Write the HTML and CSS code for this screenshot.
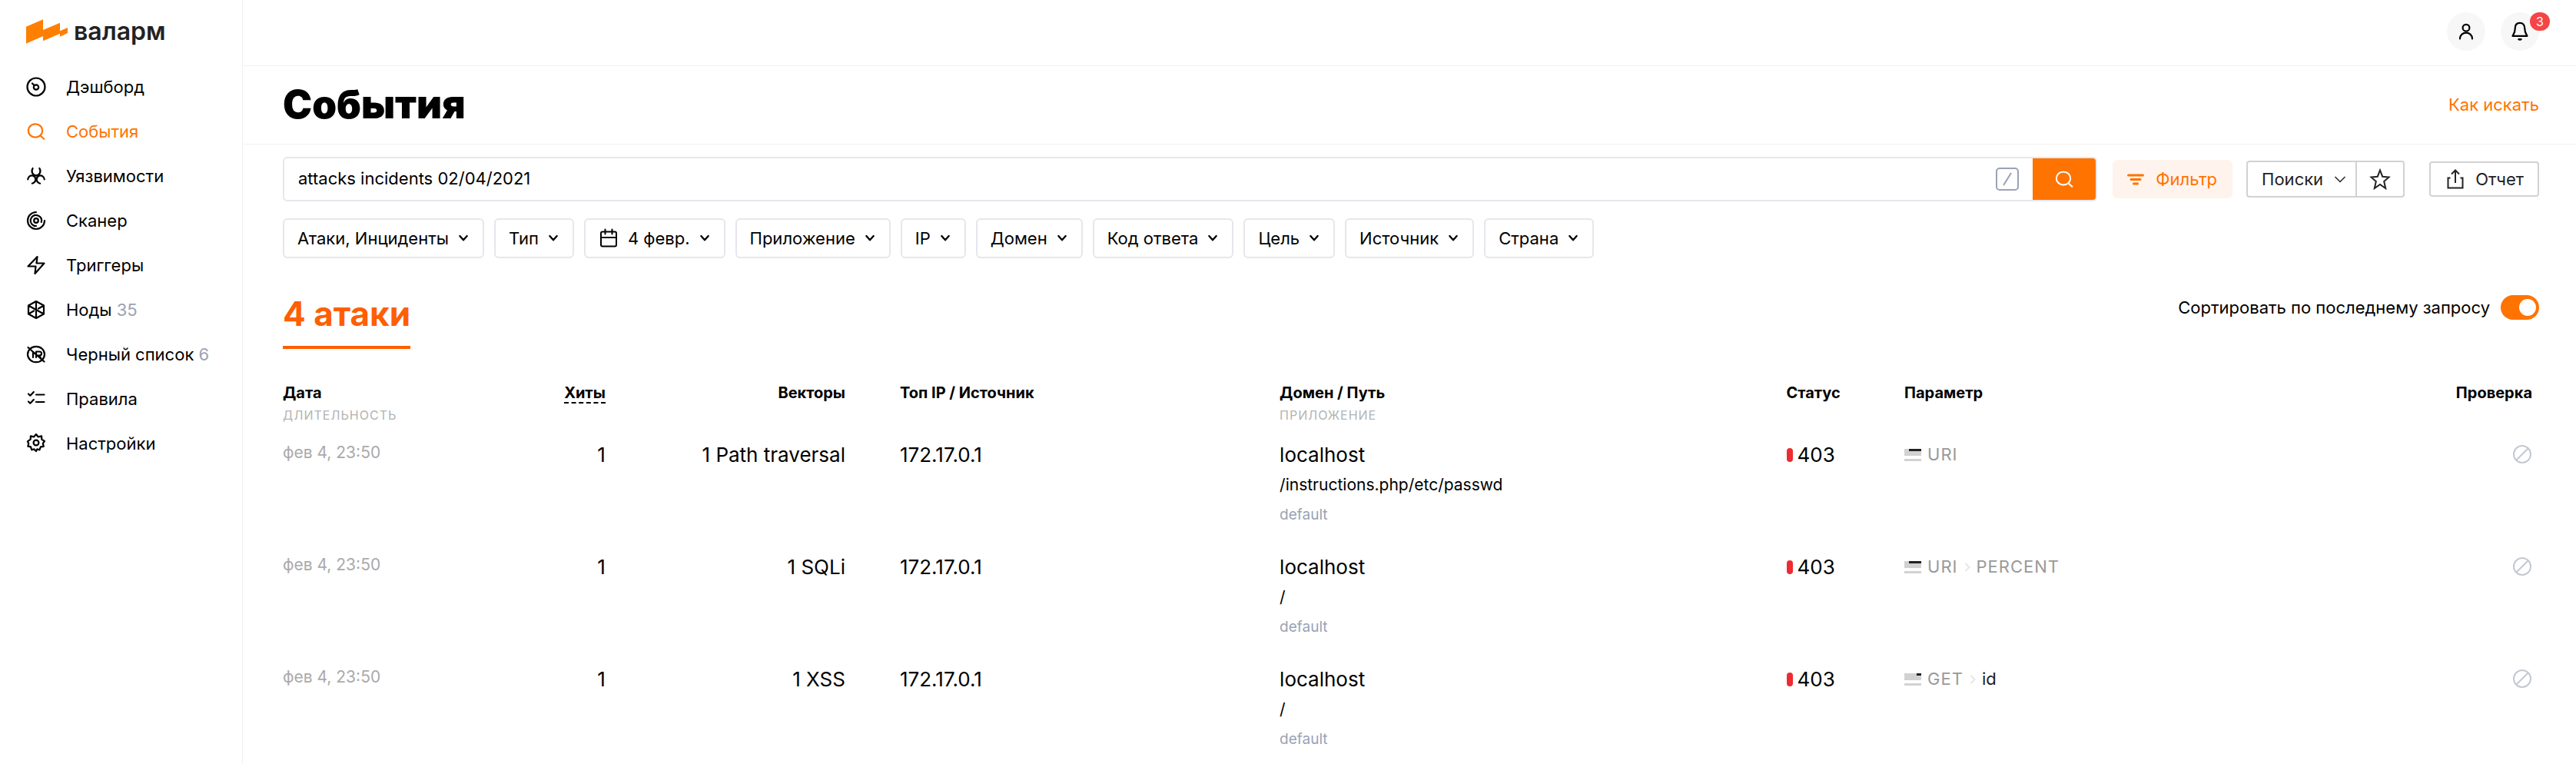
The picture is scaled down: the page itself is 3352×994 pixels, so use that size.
FILE: index.html
```html
<!DOCTYPE html>
<html lang="ru">
<head>
<meta charset="utf-8">
<title>События — Валарм</title>
<link rel="stylesheet" href="styles.css">
</head>
<body>
<svg class="sprite" aria-hidden="true">
  <symbol id="i-dash" viewBox="0 0 26 26"><circle cx="13" cy="13" r="11.5"/><circle cx="13" cy="13.5" r="3.2"/><path d="M8 8.5l2.8 2.8"/></symbol>
  <symbol id="i-search" viewBox="0 0 26 26"><ellipse cx="12" cy="12" rx="9.2" ry="8.6"/><path d="M18.5 18.5l4.8 4.3"/></symbol>
  <symbol id="i-bio" viewBox="0 0 26 26"><path d="M8.6 3C6 7.2 8.600 12.300 13 12.300S20 7.200 17.400 3M2.200 17.300C2.600 13.400 6.200 11.500 9.300 12.700C13 14.100 14 21 7.800 22.700M23.800 17.300C23.400 13.400 19.800 11.500 16.700 12.700C13 14.100 12 21 18.200 22.700"/></symbol>
  <symbol id="i-scan" viewBox="0 0 26 26"><path d="M13 2A11 11 0 1 0 24 13M15 6.400A7 7 0 1 0 13 20M19.800 15A7 7 0 0 0 16.500 7"/><circle cx="13" cy="13" r="2.800"/></symbol>
  <symbol id="i-bolt" viewBox="0 0 26 26"><path d="M14.500 2L2.500 14.500H12.500L11.500 24L23.500 10.500H13.500Z"/></symbol>
  <symbol id="i-node" viewBox="0 0 26 26"><path d="M13 2l10 5.500v11L13 24 3 18.500v-11ZM13 2v22M3 7.500l20 11M23 7.500l-7 4M3 18.500l7-4"/></symbol>
  <symbol id="i-deny" viewBox="0 0 26 26"><ellipse cx="13" cy="13" rx="11" ry="10.200"/><path d="M2.500 4l21 18.500M9 10v7M13 17V9.500h4.500a2.400 2.400 0 0 1 0 5H13M17 14.500l2 3"/></symbol>
  <symbol id="i-rules" viewBox="0 0 26 26"><path d="M3 6.500l2.300 2.200L9.800 4M3 16.500l2.300 2.200L9.800 14M13 7.500h10.500M13 17h10.500"/></symbol>
  <symbol id="i-gear" viewBox="0 0 26 26"><circle cx="13" cy="12" r="3.400"/><path d="M13 1l2.600 3.300 4.500-.9.200 4.200 3.700 2.400-2.200 2.900 1 3.900-3.900.6-1.500 3.900-3.100-.9L13 23l-2.600-2.600-3.200.9-1.200-3.900-3.600-.7.800-3.700L2 10.200l3.700-2.500.2-4.300 4.300.9Z"/></symbol>
  <symbol id="i-down" viewBox="0 0 12 12"><path d="M2 3.500l4 4.500 4-4.500"/></symbol>
  <symbol id="i-none" viewBox="0 0 26 26"><circle cx="13" cy="13" r="11"/><path d="M5.500 20.500l15-15"/></symbol>
</svg>
<div class="app">
  <aside class="sidebar">
    <a class="logo" href="#">
      <svg class="logo__mark" viewBox="0 0 162 94" aria-hidden="true"><path d="M0 28L66 0V41L132 13V45L162 32V53L132 67V55L66 84V65L0 94Z"/></svg>
      <span class="logo__text">валарм</span>
    </a>
    <nav>
      <ul class="menu">
        <li><a class="menu__item" href="#"><svg class="icon"><use href="#i-dash"/></svg>Дэшборд</a></li>
        <li><a class="menu__item menu__item--active" href="#"><svg class="icon"><use href="#i-search"/></svg>События</a></li>
        <li><a class="menu__item" href="#"><svg class="icon"><use href="#i-bio"/></svg>Уязвимости</a></li>
        <li><a class="menu__item" href="#"><svg class="icon"><use href="#i-scan"/></svg>Сканер</a></li>
        <li><a class="menu__item" href="#"><svg class="icon"><use href="#i-bolt"/></svg>Триггеры</a></li>
        <li><a class="menu__item" href="#"><svg class="icon"><use href="#i-node"/></svg><span>Ноды <span class="menu__count">35</span></span></a></li>
        <li><a class="menu__item" href="#"><svg class="icon"><use href="#i-deny"/></svg><span>Черный список <span class="menu__count">6</span></span></a></li>
        <li><a class="menu__item" href="#"><svg class="icon"><use href="#i-rules"/></svg>Правила</a></li>
        <li><a class="menu__item" href="#"><svg class="icon"><use href="#i-gear"/></svg>Настройки</a></li>
      </ul>
    </nav>
  </aside>
  <div class="page">
    <header class="topbar">
      <button class="round" type="button" aria-label="Профиль"><svg class="icon" viewBox="0 0 26 26"><circle cx="13" cy="8.200" r="4.400"/><path d="M5 22.500c0-10.500 16-10.500 16 0"/></svg></button>
      <button class="round" type="button" aria-label="Уведомления"><svg class="icon" viewBox="0 0 26 26"><path d="M13 1.800C9 1.800 6.800 4.500 6.800 8.500c0 5.500-1.300 7-3.300 10.300h19c-2-3.300-3.300-4.800-3.300-10.300 0-4-2.200-6.700-6.200-6.700Z"/><path d="M11.300 23a2 1.500 0 0 0 3.400 0Z"/></svg><span class="round__badge">3</span></button>
    </header>
    <div class="heading">
      <h1 class="heading__title">События</h1>
      <a class="heading__link" href="#">Как искать</a>
    </div>
    <main class="content">
      <div class="toolbar">
        <form class="search">
          <input class="search__input" type="text" aria-label="Поиск" value="attacks incidents 02/04/2021">
          <svg class="search__key" viewBox="0 0 30 30" aria-hidden="true"><rect x="1" y="1" width="28" height="28" rx="4"/><path d="M10 23L20 7"/></svg>
          <button class="search__submit" type="button" aria-label="Найти"><svg class="icon"><use href="#i-search"/></svg></button>
        </form>
        <button class="filter" type="button"><svg class="filter__icon" viewBox="0 0 24 24"><path d="M2.500 7h19M6 12.500h12M9.500 18h5"/></svg>Фильтр</button>
        <div class="saved">
          <button class="saved__main" type="button" aria-haspopup="true">Поиски<svg class="saved__arrow" viewBox="0 0 32 32"><path d="M3 10l13 13 13-13"/></svg></button>
          <button class="saved__star" type="button" aria-label="В избранное"><svg class="outline" viewBox="0 0 28 28"><path d="M14 2.500l3.200 8.200 8.300.8-6.300 5.500 2 9L14 21l-7.200 5 2-9-6.300-5.500 8.300-.8Z"/></svg></button>
        </div>
        <button class="report" type="button"><svg class="outline" viewBox="0 0 28 28"><path d="M14 19V2.500M9 7.500l5-5 5 5M7.500 12.500H4.500v13h19v-13h-3"/></svg>Отчет</button>
      </div>
      <div class="chips">
        <button class="chip" type="button">Атаки, Инциденты<svg class="chip__arrow"><use href="#i-down"/></svg></button>
        <button class="chip" type="button">Тип<svg class="chip__arrow"><use href="#i-down"/></svg></button>
        <button class="chip" type="button"><svg class="icon" viewBox="0 0 26 26"><rect x="3" y="4.500" width="20" height="19" rx="2"/><path d="M3 12h20M8.500 1.500v6M17.500 1.500v6"/></svg>4 февр.<svg class="chip__arrow"><use href="#i-down"/></svg></button>
        <button class="chip" type="button">Приложение<svg class="chip__arrow"><use href="#i-down"/></svg></button>
        <button class="chip" type="button">IP<svg class="chip__arrow"><use href="#i-down"/></svg></button>
        <button class="chip" type="button">Домен<svg class="chip__arrow"><use href="#i-down"/></svg></button>
        <button class="chip" type="button">Код ответа<svg class="chip__arrow"><use href="#i-down"/></svg></button>
        <button class="chip" type="button">Цель<svg class="chip__arrow"><use href="#i-down"/></svg></button>
        <button class="chip" type="button">Источник<svg class="chip__arrow"><use href="#i-down"/></svg></button>
        <button class="chip" type="button">Страна<svg class="chip__arrow"><use href="#i-down"/></svg></button>
      </div>
      <div class="summary">
        <h2 class="summary__tab">4 атаки</h2>
        <label class="sort">Сортировать по последнему запросу<input class="sort__toggle" type="checkbox" role="switch" checked></label>
      </div>
      <table class="attacks">
        <colgroup><col class="c-date"><col class="c-hits"><col class="c-vectors"><col class="c-ip"><col class="c-domain"><col class="c-status"><col class="c-param"><col class="c-check"></colgroup>
        <thead>
          <tr>
            <th scope="col">Дата<span class="sub">Длительность</span></th>
            <th scope="col" class="right"><span class="sorted">Хиты</span></th>
            <th scope="col" class="right vectors">Векторы</th>
            <th scope="col">Топ IP / Источник</th>
            <th scope="col">Домен / Путь<span class="sub">Приложение</span></th>
            <th scope="col">Статус</th>
            <th scope="col">Параметр</th>
            <th scope="col" class="right check">Проверка</th>
          </tr>
        </thead>
        <tbody>
          <tr>
            <td class="date">фев 4, 23:50</td>
            <td class="right">1</td>
            <td class="right vectors">1 Path traversal</td>
            <td>172.17.0.1</td>
            <td>localhost<span class="path">/instructions.php/etc/passwd</span><span class="app-name">default</span></td>
            <td><span class="status">403</span></td>
            <td><span class="param"><svg class="param__icon" viewBox="0 0 22 16"><path class="pale" d="M0 0h22v9H0zM0 13h22v3H0z"/><path d="M6 0h16v3H6z"/></svg>URI</span></td>
            <td class="right check"><svg class="none" role="img" aria-label="Нет проверки"><use href="#i-none"/></svg></td>
          </tr>
          <tr>
            <td class="date">фев 4, 23:50</td>
            <td class="right">1</td>
            <td class="right vectors">1 SQLi</td>
            <td>172.17.0.1</td>
            <td>localhost<span class="path">/</span><span class="app-name">default</span></td>
            <td><span class="status">403</span></td>
            <td><span class="param"><svg class="param__icon" viewBox="0 0 22 16"><path class="pale" d="M0 0h22v9H0zM0 13h22v3H0z"/><path d="M6 0h16v3H6z"/></svg>URI<svg class="param__sep" viewBox="0 0 8 12"><path d="M1.500 1l5 5-5 5"/></svg>PERCENT</span></td>
            <td class="right check"><svg class="none" role="img" aria-label="Нет проверки"><use href="#i-none"/></svg></td>
          </tr>
          <tr>
            <td class="date">фев 4, 23:50</td>
            <td class="right">1</td>
            <td class="right vectors">1 XSS</td>
            <td>172.17.0.1</td>
            <td>localhost<span class="path">/</span><span class="app-name">default</span></td>
            <td><span class="status">403</span></td>
            <td><span class="param"><svg class="param__icon" viewBox="0 0 22 16"><path class="pale" d="M0 0h22v9H0zM0 13h22v3H0z"/><path d="M16 0h6v3h-6z"/></svg>GET<svg class="param__sep" viewBox="0 0 8 12"><path d="M1.500 1l5 5-5 5"/></svg><span class="param__name">id</span></span></td>
            <td class="right check"><svg class="none" role="img" aria-label="Нет проверки"><use href="#i-none"/></svg></td>
          </tr>
        </tbody>
      </table>
    </main>
  </div>
</div>
</body>
</html>
```

FILE: styles.css
```css
:root {
  --orange: #ff7300;
  --line: #f1f1f3;
  --border: #e6e6ec;
}

* { box-sizing: border-box; }

body {
  margin: 0;
  background: #fff;
  color: #000;
  font-family: Inter, "Liberation Sans", sans-serif;
  font-size: 22px;
  line-height: 26px;
}

button, input { font: inherit; color: inherit; }
button { margin: 0; cursor: pointer; }
a { color: inherit; text-decoration: none; }

.sprite { display: none; }

svg { fill: none; stroke: currentColor; flex: none; }

.icon {
  width: 26px;
  height: 26px;
  stroke-width: 2;
  stroke-linecap: round;
  stroke-linejoin: round;
}

.app { display: flex; min-height: 100vh; }

.sidebar {
  flex: none;
  width: 316px;
  border-right: 1px solid var(--line);
  padding: 24px 16px 24px 34px;
}

.sidebar .icon, .round .icon { stroke-width: 2.2; }

.logo { display: flex; align-items: center; gap: 8px; height: 34px; }
.logo__mark { width: 54px; height: 32px; stroke: none; fill: #ff7f00; }
.logo__text { color: #222; font-size: 32px; line-height: 34px; font-weight: 600; }

.menu { list-style: none; margin: 26px 0 0; padding: 0; }
.menu__item { display: flex; align-items: center; gap: 26px; height: 58px; white-space: nowrap; }
.menu__item--active { color: var(--orange); }
.menu__count { color: #9aa2b5; }

.page { flex: 1; min-width: 0; }

.topbar {
  display: flex;
  justify-content: flex-end;
  align-items: center;
  gap: 20px;
  height: 86px;
  padding: 0 48px 4px;
  border-bottom: 1px solid var(--line);
}

.round {
  position: relative;
  display: grid;
  place-items: center;
  width: 50px;
  height: 50px;
  padding: 0;
  border: 0;
  border-radius: 50%;
  background: #f7f7f7;
}
.round__badge {
  position: absolute;
  top: 0;
  right: -14px;
  width: 26px;
  height: 24px;
  border-radius: 12px;
  background: #f54545;
  color: #fff;
  font-size: 16px;
  line-height: 24px;
  text-align: center;
}

.heading {
  display: flex;
  justify-content: space-between;
  align-items: center;
  min-height: 102px;
  padding: 0 48px 2px 52px;
  border-bottom: 1px solid var(--line);
}
.heading__title { margin: 0; font-size: 51px; line-height: 60px; font-weight: 900; }
.heading__link { color: var(--orange); }

.content { padding: 16px 48px 0 52px; }

.toolbar { display: flex; align-items: center; }

.search {
  flex: 1;
  display: flex;
  align-items: center;
  height: 58px;
  border: 2px solid var(--border);
  border-radius: 6px;
}
.search__input {
  flex: 1;
  min-width: 0;
  height: 100%;
  padding: 0 18px 2px;
  border: 0;
  outline: 0;
  background: none;
}
.search__key { width: 30px; height: 30px; margin-right: 18px; color: #9aa2b5; stroke-width: 2; }
.search__submit {
  display: grid;
  place-items: center;
  width: 82px;
  height: 100%;
  padding: 0;
  border: 0;
  border-radius: 0 4px 4px 0;
  background: var(--orange);
  color: #fff;
}

.filter {
  display: flex;
  align-items: center;
  gap: 14px;
  height: 50px;
  margin-left: 20px;
  padding: 0 20px 0 18px;
  border: 0;
  border-radius: 6px;
  background: #fff3ed;
  color: var(--orange);
}
.filter__icon { width: 24px; height: 24px; stroke-width: 3; stroke-linecap: round; }

.saved { display: flex; height: 48px; margin-left: 18px; }
.saved__main, .saved__star, .report {
  display: flex;
  align-items: center;
  border: 2px solid #d2d2d2;
  background: #fff;
  color: #222;
}
.saved__main { gap: 14px; padding: 0 12px 0 18px; border-radius: 4px 0 0 4px; border-right: 0; }
.saved__arrow { width: 16px; height: 16px; stroke-width: 3; }
.saved__star { padding: 0 16px; border-radius: 0 4px 4px 0; }
.outline { width: 28px; height: 28px; stroke-width: 2; }
.report { gap: 12px; height: 46px; margin-left: 32px; padding: 0 18px; border-radius: 4px; }

.chips { display: flex; flex-wrap: wrap; gap: 13px; margin-top: 22px; }
.chip {
  display: flex;
  align-items: center;
  gap: 12px;
  height: 52px;
  padding: 0 18px 0 17px;
  border: 2px solid var(--border);
  border-radius: 6px;
  background: #fff;
  white-space: nowrap;
}
.chip__arrow { width: 14px; height: 14px; stroke-width: 2; stroke-linecap: round; stroke-linejoin: round; }

.summary { display: flex; justify-content: space-between; align-items: flex-start; margin-top: 44px; }
.summary__tab {
  margin: 0;
  padding-bottom: 14px;
  border-bottom: 4px solid #ff5f00;
  color: #ff5f00;
  font-size: 44px;
  line-height: 56px;
  font-weight: 700;
}
.sort { display: flex; align-items: center; gap: 14px; padding-top: 4px; }
.sort__toggle {
  appearance: none;
  display: flex;
  justify-content: flex-end;
  align-items: center;
  width: 50px;
  height: 32px;
  margin: 0;
  padding: 4px;
  border-radius: 16px;
  background: var(--orange);
}
.sort__toggle::before { content: ""; width: 22px; height: 22px; border-radius: 50%; background: #fff; }
.sort__toggle:not(:checked) { justify-content: flex-start; background: #c9ccd4; }

.attacks { width: 100%; margin-top: 43px; border-collapse: collapse; table-layout: fixed; }
.c-date { width: 10%; }
.c-hits { width: 4.3%; }
.c-vectors { width: 13.05%; }
.c-ip { width: 16.83%; }
.c-domain { width: 22.46%; }
.c-status { width: 5.23%; }
.c-param { width: 20%; }

th, td { padding: 0; text-align: left; vertical-align: top; }
th { height: 75px; font-size: 20px; line-height: 28px; font-weight: 700; }
td { height: 146px; font-size: 26px; line-height: 39px; }
.right { text-align: right; }
.vectors { padding-right: 71px; }
.check { padding-right: 9px; }

.sub {
  display: block;
  color: #b3b3b3;
  font-size: 16px;
  line-height: 30px;
  font-weight: 400;
  letter-spacing: 1px;
  text-transform: uppercase;
}
.sorted { border-bottom: 2px dashed #000; }

.date { color: #aaa; font-size: 21px; line-height: 34px; }
.path { display: block; font-size: 21px; }
.app-name { display: block; color: #9aa2b5; font-size: 19px; }

.status { display: flex; align-items: center; gap: 6px; }
.status::before { content: ""; width: 8px; height: 18px; border-radius: 4px; background: #ee2b30; }

.param { display: flex; align-items: center; gap: 8px; color: #999; font-size: 22px; letter-spacing: 1px; }
.param__icon { width: 22px; height: 16px; stroke: none; fill: #222; }
.pale { fill: #d2d2d2; }
.param__sep { width: 8px; height: 12px; color: #e6e6e6; stroke-width: 2; }
.param__name { color: #222; letter-spacing: 0; }

.none { width: 26px; height: 26px; margin-top: 6px; color: #c4c9d1; stroke-width: 2; }
```
